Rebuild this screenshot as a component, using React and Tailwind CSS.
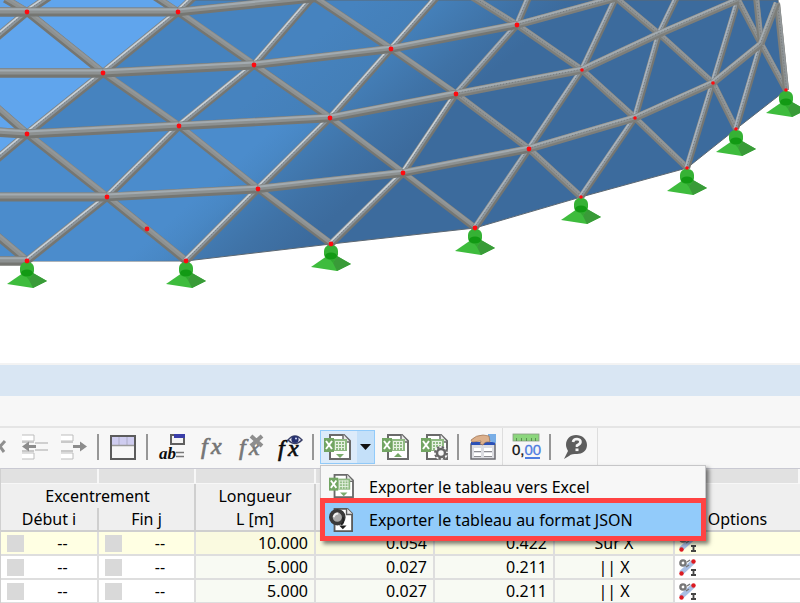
import { useState } from "react";
import clsx from "clsx";

// Rings of the dome, listed left to right
const rings = [
  [[-20, 12], [27, 12], [178, 12], [315, -2]],
  [[-20, 73], [103, 73], [254, 65], [391, 49], [517, 25], [616, -2]],
  [[-20, 131], [27, 134], [179, 126], [330, 118], [456, 94], [582, 70], [659, 34], [738, 0]],
  [[-20, 197], [107, 197], [258, 189], [403, 173], [529, 149], [635, 118], [713, 83], [761, 44], [777, 3]],
  [[-20, 261], [27, 261]],
];

const diagonals = [
  [5, -1, 27, 12], [27, 12, 49, -3], [-4, 38, 27, 12], [27, 12, 103, 73],
  [155, -3, 178, 12], [178, 12, 194, -3], [103, 73, 178, 12], [178, 12, 254, 65],
  [27, 134, 103, 73], [103, 73, 179, 126], [179, 126, 254, 65], [254, 65, 313, -3],
  [254, 65, 330, 118], [315, -2, 391, 49], [330, 118, 391, 49], [391, 49, 437, -3],
  [391, 49, 456, 94], [472, -3, 517, 25], [456, 94, 517, 25], [517, 25, 529, -3],
  [517, 25, 582, 70], [582, 70, 616, -2], [616, -2, 659, 34], [659, 34, 677, -3],
  [-4, 107, 27, 134], [-4, 160, 27, 134], [27, 134, 107, 197], [107, 197, 179, 126],
  [179, 126, 258, 189], [258, 189, 330, 118], [330, 118, 403, 173], [403, 173, 456, 94],
  [456, 94, 529, 149], [529, 149, 582, 70], [582, 70, 635, 118], [635, 118, 659, 34],
  [659, 34, 713, 83], [713, 83, 738, 0], [738, 0, 761, 44], [756, -3, 761, 44],
  [-4, 235, 27, 261], [27, 261, 107, 197], [107, 197, 186, 261], [186, 261, 258, 189],
  [258, 189, 331, 244], [331, 244, 403, 173], [403, 173, 475, 228], [475, 228, 529, 149],
  [529, 149, 581, 197], [581, 197, 635, 118], [635, 118, 687, 168], [687, 168, 713, 83],
  [713, 83, 736, 129], [736, 129, 761, 44], [761, 44, 786, 90], [777, 3, 786, 90],
];

const supports = [[27, 261], [186, 261], [331, 244], [475, 228], [581, 197], [687, 168], [736, 129], [786, 90]];

const nodes = [
  [27, 12], [178, 12], [103, 73], [254, 65], [391, 49], [517, 25], [27, 134], [179, 126],
  [330, 118], [456, 94], [582, 70], [107, 197], [258, 189], [403, 173], [529, 149],
  [635, 118], [713, 83], [147, 229], ...supports,
];

const Tube = ({ x1, y1, x2, y2, ring }) => {
  const length = Math.hypot(x2 - x1, y2 - y1);
  const nx = (y2 - y1) / length;
  const ny = -(x2 - x1) / length;
  const mid = (x1 + x2) / 2;
  const width = (ring ? 9.4 : 7.8) - (mid / 800) * (ring ? 2.8 : 1.8);
  const rising = !ring && y2 < y1;
  const far = mid > 480;
  const shift = (d) => ({ x1: x1 + nx * d, y1: y1 + ny * d, x2: x2 + nx * d, y2: y2 + ny * d });
  let shine = "#93989b";
  if (rising) shine = far ? "#a9b4bf" : "#cbd3d9";
  else if (ring) shine = "#a3abb0";

  return (
    <g>
      <line {...shift(0)} stroke={far && !rising ? "#7d7e7a" : "#757672"} strokeWidth={width} />
      <line {...shift(width * 0.16)} stroke={rising ? "#8d969d" : "#8d9191"} strokeWidth={width * 0.64} />
      <line {...shift(width * 0.28)} stroke={shine} strokeWidth={ring ? 2 : 1.5} />
      {(rising || far) && (
        <line {...shift(width * 0.1)} stroke="#666d73" strokeWidth="0.7" strokeDasharray="1 2" />
      )}
    </g>
  );
};

const Support = ({ x, y }) => (
  <g transform={`translate(${x} ${y})`}>
    <path d="M-20 23 L-4 12 L6 12 L20 20 L6 27 Z" fill="#3ebc3d" />
    <path d="M6 12 L20 20 L6 27 L2 19 Z" fill="#399b38" />
    <path d="M-4 12 L2 19 L6 12 Z" fill="#32a832" />
    <rect x="-7" y="1" width="14" height="15" rx="6" fill="#36b235" />
    <ellipse cx="0" cy="12" rx="6" ry="3.5" fill="#129a14" />
  </g>
);

const ModelView = () => (
  <svg viewBox="0 0 800 363" className="block w-full bg-white" role="img">
    <defs>
      <linearGradient id="shell" gradientUnits="userSpaceOnUse" x1="120" y1="216" x2="217" y2="323">
        <stop offset="0" stopColor="#4683bf" />
        <stop offset="0.4" stopColor="#447fb8" />
        <stop offset="0.75" stopColor="#3f72a6" />
        <stop offset="1" stopColor="#3c6b9d" />
      </linearGradient>
      <linearGradient id="low" gradientUnits="userSpaceOnUse" x1="145" y1="243" x2="188" y2="291">
        <stop offset="0" stopColor="#4b8ccc" />
        <stop offset="1" stopColor="#4b8ccb" stopOpacity="0" />
      </linearGradient>
    </defs>
    <path
      d="M0 0 H778 L786 90 L736 129 L687 168 L581 197 L475 228 L331 244 L186 261 H0 Z"
      fill="url(#shell)"
      stroke="#5d6872"
      strokeWidth="1"
    />
    <path d="M0 134 H27 L179 126 L330 118 L258 189 L186 261 H0 Z" fill="url(#low)" />
    <path d="M0 0 H194 L178 12 L103 73 L27 134 L0 157 Z" fill="#60a5ed" />
    {diagonals.map(([x1, y1, x2, y2], i) => (
      <Tube key={i} x1={x1} y1={y1} x2={x2} y2={y2} />
    ))}
    {rings.map((ring, r) =>
      ring.slice(1).map(([x, y], i) => (
        <Tube key={`${r}-${i}`} x1={ring[i][0]} y1={ring[i][1]} x2={x} y2={y} ring />
      ))
    )}
    {supports.map(([x, y]) => (
      <Support key={x} x={x} y={y} />
    ))}
    {nodes.map(([x, y], i) => (
      <circle key={i} cx={x} cy={y} r={x > 560 ? 1.8 : 2.4} fill="#ff0a0f" />
    ))}
  </svg>
);

const Icon = ({ children, className = "h-[26px] w-[26px]" }) => (
  <svg viewBox="0 0 26 26" className={clsx("shrink-0 overflow-visible", className)} aria-hidden="true">
    {children}
  </svg>
);

const CloseIcon = () => (
  <Icon>
    <path d="M13 7 L21 18 M22 7 L12 18" stroke="#8f8f8f" strokeWidth="3" />
  </Icon>
);

const RowLines = () => (
  <>
    <path d="M0 1 H12 V7 H0 M0 19 H12 V25 H0" fill="#fff" stroke="#bdbdbd" />
    <path d="M0 8 H12 M0 17 H12" stroke="#c9c9c9" strokeWidth="2" />
  </>
);

const InsertIcon = () => (
  <Icon>
    <RowLines />
    <path d="M13 9 H26 M13 16 H26" stroke="#cfcfcf" strokeWidth="2" />
    <path d="M0 12.500 L7 7.500 V11 H14 V14 H7 V17.500 Z" fill="#8c8c8c" />
  </Icon>
);

const RemoveIcon = () => (
  <Icon>
    <RowLines />
    <path d="M26 12.500 L19 7.500 V11 H12 V14 H19 V17.500 Z" fill="#8c8c8c" />
  </Icon>
);

const TableIcon = () => (
  <Icon>
    <rect x="1" y="2" width="24" height="23" fill="#f7f7f7" stroke="#5c5c5c" strokeWidth="2" />
    <rect x="2" y="3" width="22" height="8" fill="#cfcdf0" />
    <path d="M9 3 V11 M17 3 V11" stroke="#adadc8" />
    <path d="M2 11.500 H24" stroke="#9a9a9a" strokeWidth="1.500" />
  </Icon>
);

const RenameIcon = () => (
  <Icon>
    <rect x="12" y="1" width="13" height="9" fill="#f3f3f3" stroke="#5f5f5f" strokeWidth="2" />
    <path d="M15 0 H26 V4 H15 Z" fill="#3a3ea8" />
    <text x="0" y="25" fontFamily="Liberation Serif" fontStyle="italic" fontWeight="bold" fontSize="17" fill="#0c0c0c">
      ab
    </text>
    <path d="M17 18.500 H25 M17 22.500 H25" stroke="#777" strokeWidth="1.500" />
  </Icon>
);

const FxText = ({ color }) => (
  <text x="3" y="20" fontFamily="Liberation Serif" fontStyle="italic" fontSize="24" fill={color} stroke={color} strokeWidth="0.7">
    <tspan>f</tspan>
    <tspan x="13">x</tspan>
  </text>
);

const FxIcon = () => (
  <Icon>
    <FxText color="#757575" />
  </Icon>
);

const FxDeleteIcon = () => (
  <Icon>
    <g transform="translate(-1 1)">
      <FxText color="#777" />
    </g>
    <path d="M14 2 L25 12 M25 2 L14 12" stroke="#8e8e8e" strokeWidth="4" />
  </Icon>
);

const FxViewIcon = () => (
  <Icon>
    <g transform="translate(-1 2)">
      <FxText color="#0d0d0d" />
    </g>
    <path d="M12 6 Q19 -2 26 6 Q19 13 12 6 Z" fill="#e8e8f2" stroke="#3a4068" strokeWidth="1.500" />
    <circle cx="19" cy="5.500" r="3.600" fill="#25306e" />
    <circle cx="20" cy="4.500" r="1" fill="#d5dbff" />
  </Icon>
);

const ExcelSheet = () => (
  <>
    <path d="M6 1 H20 L26 7 V25 H6 Z" fill="#fff" stroke="#6a6a6a" strokeWidth="2" />
    <path d="M19 0 V8 H26" fill="#e9e9e9" stroke="#6a6a6a" strokeWidth="1.500" />
    <rect x="0" y="4" width="10" height="14" fill="#72a563" />
    <rect x="10" y="5" width="13" height="12" fill="#8fba82" />
    <path d="M2 7 L8 15 M8 7 L2 15" stroke="#fff" strokeWidth="2" />
    <path d="M11 7.500 H21 M11 10.500 H21 M11 13.500 H21 M11.500 7 V16 M14.500 7 V16 M17.500 7 V16 M20.500 7 V16" stroke="#e6f1e2" />
  </>
);

const ExportIcon = ({ className }) => (
  <Icon className={className}>
    <ExcelSheet />
    <path d="M12 20 H20 L16 24 Z" fill="#7cab6e" />
  </Icon>
);

const ImportIcon = () => (
  <Icon>
    <ExcelSheet />
    <path d="M12 23 H20 L16 19 Z" fill="#72a563" />
  </Icon>
);

const ExcelSettingsIcon = () => (
  <Icon>
    <ExcelSheet />
    <circle cx="20" cy="19" r="7" fill="#f6f6f6" />
    <circle cx="20" cy="19" r="4" fill="none" stroke="#666" strokeWidth="2.500" />
    <circle cx="20" cy="19" r="6" fill="none" stroke="#666" strokeWidth="2" strokeDasharray="2.400 2.300" />
  </Icon>
);

const PropertiesIcon = () => (
  <Icon>
    <path d="M1 10 H25 V25 H1 Z" fill="#dcdde2" stroke="#6b6b70" strokeWidth="1.500" />
    <rect x="1" y="8" width="24" height="3" fill="#2a50b8" />
    <path d="M4 15.500 H11 M4 20.500 H11 M14 15.500 H22 M14 20.500 H22" stroke="#fff" strokeWidth="3" />
    <path d="M4 17.500 H11 M4 22.500 H11 M14 17.500 H22 M14 22.500 H22" stroke="#8c8c92" />
    <path d="M18 0 H26 V9 L18 7 Z" fill="#79aee6" />
    <path d="M1 6 Q6 1 13 1 L19 2 L20 8 Q15 7 13 11 L10 10 L11 7 L2 8 Z" fill="#dcb08c" stroke="#9b7152" strokeWidth="0.700" />
  </Icon>
);

const DecimalsIcon = () => (
  <Icon>
    <rect x="0" y="0" width="26" height="7" fill="#8bd67c" stroke="#8a9c86" strokeWidth="0.800" />
    <path d="M3.500 4 V7 M8.500 4 V7 M13.500 4 V7 M18.500 4 V7 M22.500 4 V7" stroke="#5c8f53" />
    <text x="-1" y="21" fontFamily="Liberation Sans" fontSize="15" fill="#111" stroke="#111" strokeWidth="0.3">
      0,
      <tspan fill="#4f7de0" stroke="#4f7de0">00</tspan>
    </text>
    <path d="M12 24 H27" stroke="#4f7de0" strokeWidth="2" />
  </Icon>
);

const HelpIcon = () => (
  <Icon>
    <path d="M14 1 C20 1 25 5 25 11 C25 17 20 20 15 20 C12 20 9 20 7 22 L2 25 L6 17 C5 15 4 13 4 11 C4 5 8 1 14 1 Z" fill="#5e5e5e" />
    <path d="M11 8 Q11.500 5 15 5 Q18.500 5.300 18.500 8 Q18.300 10 15 11.500 V13" fill="none" stroke="#f6f6f6" strokeWidth="2.600" />
    <rect x="13.500" y="14.500" width="3" height="2.600" fill="#f6f6f6" />
  </Icon>
);

const JsonIcon = () => (
  <Icon className="h-6 w-6">
    <path d="M6 1 H20 L25 6 V25 H6 Z" fill="#fff" stroke="#5b5b5b" strokeWidth="2" />
    <path d="M19 0 V7 H26" fill="#e9e9e9" stroke="#5b5b5b" strokeWidth="1.500" />
    <circle cx="9" cy="10" r="7" fill="#a9a9a9" stroke="#3a3a3a" strokeWidth="4" />
    <path d="M5 10 Q6 6 10 6" fill="none" stroke="#f0f0f0" strokeWidth="2" />
    <path d="M15 10 Q17 16 13 18" fill="none" stroke="#222" strokeWidth="2" />
    <path d="M11 19 H19 L15 23 Z" fill="#1e1e1e" />
  </Icon>
);

const MemberIcon = () => (
  <svg viewBox="0 0 17 17" className="block h-[17px] w-[17px]" aria-hidden="true">
    <path d="M2 14 L14 3" stroke="#a9bfe4" strokeWidth="5" />
    <circle cx="4" cy="4" r="2.600" fill="none" stroke="#777" strokeWidth="2.400" />
    <path d="M8 3 L11 1 M7 8 L10 6" stroke="#777" strokeWidth="1.500" />
    <circle cx="14.500" cy="2.500" r="2.200" fill="#dc1b22" />
    <circle cx="2.500" cy="14.500" r="2.200" fill="#dc1b22" />
    <path d="M12 11 H17 M12 16 H17 M14.500 11 V16" stroke="#444" strokeWidth="1.800" />
  </svg>
);

const ToolButton = ({ label, children, className }) => (
  <button
    title={label}
    aria-label={label}
    className={clsx("flex h-9 w-[39px] shrink-0 items-center justify-center hover:bg-[#dcebfa]", className)}
  >
    {children}
  </button>
);

const Separator = () => (
  <div className="flex w-[10px] shrink-0 justify-center">
    <span className="h-[26px] w-0.5 bg-[#979797]" />
  </div>
);

const ExportMenu = () => (
  <ul className="absolute top-full -left-px z-20 mt-0.5 w-[386px] border-x border-t border-[#c6c6c8] bg-[#f7f7f7] shadow-[3px_3px_4px_rgba(0,0,0,0.5)]">
    <li>
      <button className="flex h-8 w-full items-end gap-4 pl-2">
        <ExportIcon className="h-6 w-6" />
        <span>Exporter le tableau vers Excel</span>
      </button>
    </li>
    <li>
      <button className="-mx-px flex h-[43px] w-[386px] items-center gap-4 border-[5px] border-[#ff4343] bg-[#92cbfa] pl-1">
        <JsonIcon />
        <span>Exporter le tableau au format JSON</span>
      </button>
    </li>
  </ul>
);

const Toolbar = () => {
  const [open, setOpen] = useState(true);

  return (
    <div className="border-t-2 border-[#e5e5e5]">
      <div className="flex h-10 items-start">
        <div className="flex h-[38px] items-center border-r border-[#dedede]">
          <ToolButton label="Supprimer" className="-ml-6">
            <CloseIcon />
          </ToolButton>
          <ToolButton label="Insérer une ligne">
            <InsertIcon />
          </ToolButton>
          <ToolButton label="Retirer une ligne">
            <RemoveIcon />
          </ToolButton>
          <Separator />
          <ToolButton label="Afficher le tableau">
            <TableIcon />
          </ToolButton>
          <Separator />
          <ToolButton label="Renommer">
            <RenameIcon />
          </ToolButton>
          <ToolButton label="Formule">
            <FxIcon />
          </ToolButton>
          <ToolButton label="Supprimer la formule">
            <FxDeleteIcon />
          </ToolButton>
          <ToolButton label="Afficher la formule">
            <FxViewIcon />
          </ToolButton>
          <Separator />
          <div className="relative ml-0.5 flex h-[34px] border border-[#92cbfa]">
            <button title="Exporter" aria-label="Exporter" className="flex w-9 items-center justify-center bg-[#dcebfa] pr-1">
              <ExportIcon />
            </button>
            <button
              aria-label="Options d'exportation"
              aria-expanded={open}
              onClick={() => setOpen(!open)}
              className="flex w-[17px] items-center justify-center bg-[#c4e0f9]"
            >
              <svg viewBox="0 0 11 6" className="h-1.5 w-[11px]" aria-hidden="true">
                <path d="M0 0 H11 L5.500 6 Z" fill="#111" />
              </svg>
            </button>
            {open && <ExportMenu />}
          </div>
          <ToolButton label="Importer">
            <ImportIcon />
          </ToolButton>
          <ToolButton label="Paramètres Excel">
            <ExcelSettingsIcon />
          </ToolButton>
          <Separator />
          <ToolButton label="Propriétés">
            <PropertiesIcon />
          </ToolButton>
        </div>
        <div className="flex h-[38px] items-center border-r border-[#dedede] px-[3px]">
          <ToolButton label="Décimales">
            <DecimalsIcon />
          </ToolButton>
          <Separator />
          <ToolButton label="Aide">
            <HelpIcon />
          </ToolButton>
        </div>
      </div>
    </div>
  );
};

const rows = [
  { length: "10.000", volume: "0.054", mass: "0.422", position: "Sur X", selected: true },
  { length: "5.000", volume: "0.027", mass: "0.211", position: "|| X" },
  { length: "5.000", volume: "0.027", mass: "0.211", position: "|| X" },
];

const head = "border-r-2 border-[#cfcfcf] p-0 font-normal";
const cell = "border-r-2 border-b-2 border-[#dedede] py-0";

const EccentricityCell = ({ label }) => (
  <td className={cell}>
    <div className="flex items-center pl-1.5">
      <input type="checkbox" aria-label={label} className="h-[17px] w-[17px] appearance-none bg-[#d9d9d9]" />
      <span className="flex-1 pl-1 text-center">--</span>
    </div>
  </td>
);

const MembersTable = () => (
  <table className="w-full table-fixed border-separate border-spacing-0 border-t border-l border-t-[#c9c9d2] border-l-[#d0d0d0]">
    <colgroup>
      <col className="w-[98px]" />
      <col className="w-[97px]" />
      <col className="w-[120px]" />
      <col className="w-[119px]" />
      <col className="w-[120px]" />
      <col className="w-[120px]" />
      <col />
    </colgroup>
    <thead className="bg-[#efefef]">
      <tr className="h-[15px] bg-[#e1e1e1]">
        {[0, 1, 2, 3, 4, 5, 6].map((i) => (
          <td key={i} className="border-r-2 border-b border-[#f7f7f7] p-0" />
        ))}
      </tr>
      <tr className="h-6">
        <th colSpan={2} className={head}>Excentrement</th>
        <th className={head}>Longueur</th>
        <td className={head} />
        <td className={head} />
        <td className={head} />
        <td className="p-0" />
      </tr>
      <tr className="h-6">
        <th className={clsx(head, "border-b-2")}>Début i</th>
        <th className={clsx(head, "border-b-2")}>Fin j</th>
        <th className={clsx(head, "border-b-2")}>L [m]</th>
        <td className={clsx(head, "border-b-2")} />
        <td className={clsx(head, "border-b-2")} />
        <td className={clsx(head, "border-b-2")} />
        <th className="border-b-2 border-[#cfcfcf] p-0 font-normal">Options</th>
      </tr>
    </thead>
    <tbody>
      {rows.map((row, i) => {
        const computed = row.selected ? "bg-[#fafae0]" : "bg-[#f8faf3]";
        return (
          <tr key={i} className={clsx("h-6", row.selected ? "bg-[#ffffe3]" : "bg-white")}>
            <EccentricityCell label="Début i" />
            <EccentricityCell label="Fin j" />
            <td className={clsx(cell, computed, "pr-1.5 text-right")}>{row.length}</td>
            <td className={clsx(cell, computed, "pr-1.5 text-right")}>{row.volume}</td>
            <td className={clsx(cell, computed, "pr-1.5 text-right")}>{row.mass}</td>
            <td className={clsx(cell, computed, "px-0 text-center")}>{row.position}</td>
            <td className="border-b-2 border-[#dedede] py-0 pl-1">
              <MemberIcon />
            </td>
          </tr>
        );
      })}
    </tbody>
  </table>
);

const App = () => {
  return (
    <div className="min-h-screen overflow-hidden bg-white font-['Noto_Sans','Open_Sans',sans-serif] text-base leading-[22px] text-black">
      <ModelView />
      <div className="border-t-2 border-[#f3f3f3] bg-[#f7f7f7]">
        <div className="h-[31px] bg-[#d9e6f3]" />
        <div className="h-[30px]" />
        <Toolbar />
        <MembersTable />
      </div>
    </div>
  );
};

export default App;
